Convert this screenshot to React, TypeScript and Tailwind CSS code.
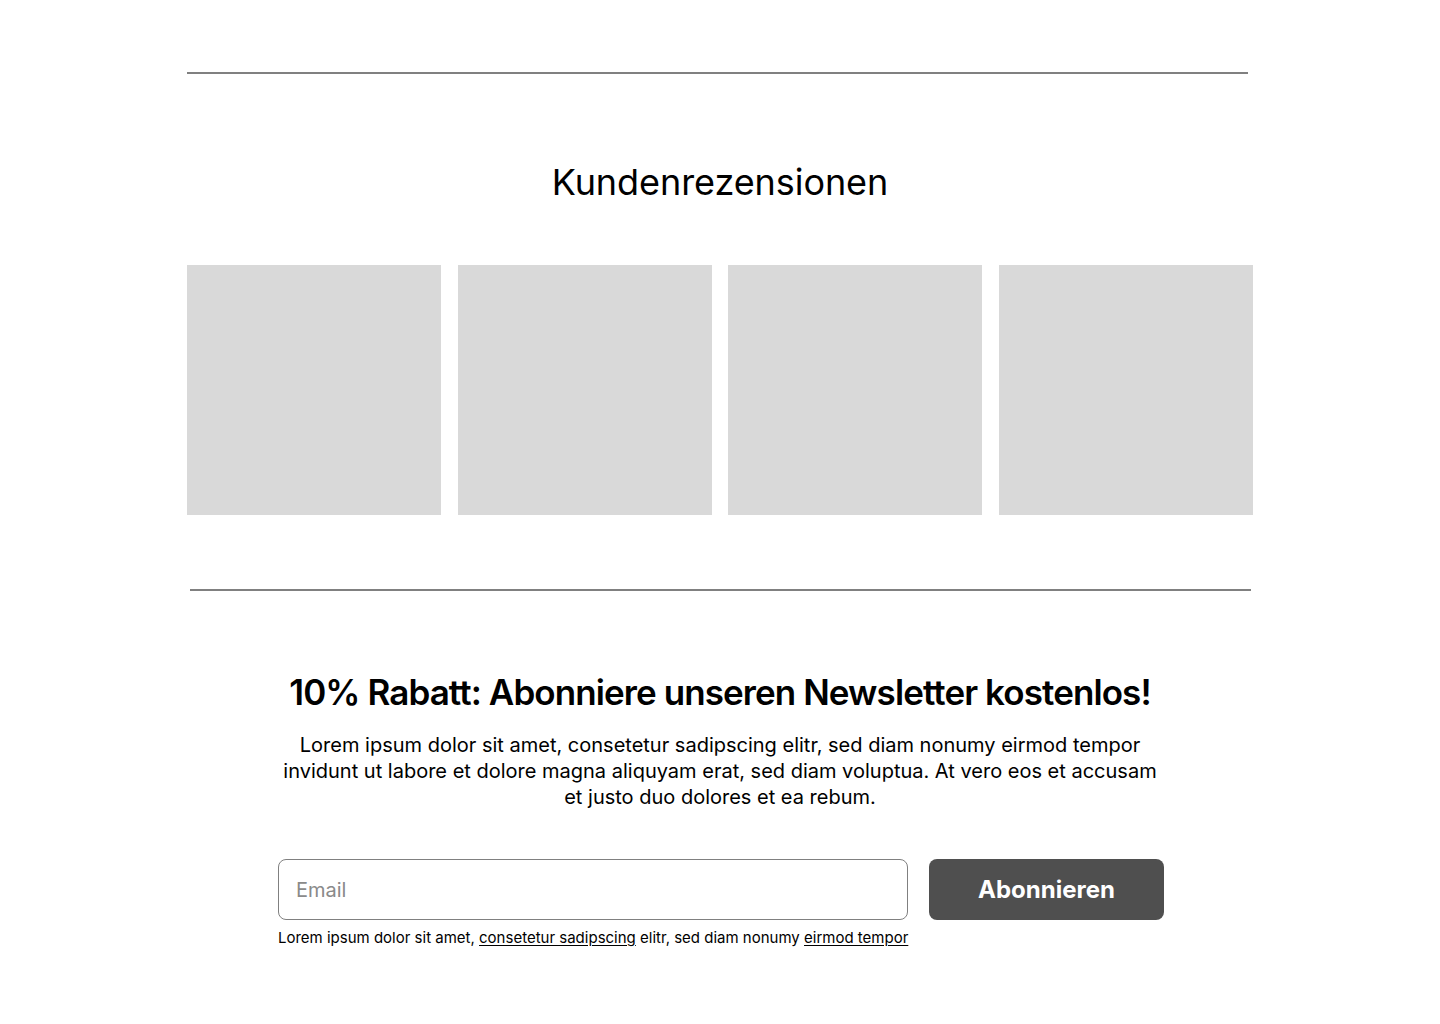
export default function App() {
  return (
    <div className="min-h-[1024px] bg-white text-black" style={{ fontFamily: 'Inter, "Noto Sans", sans-serif' }}>
      {/* Reviews */}
      <section className="pt-[72px]">
        <div className="ml-[187px] w-[1061px] h-[2px] bg-[#808080]" />
        <h2 className="mt-[86px] text-center text-[36px] leading-[44px] font-normal tracking-[-0.002em]">Kundenrezensionen</h2>
        <div className="mt-[61px] ml-[187px] flex gap-[16.5px]">
          <div className="w-[254px] h-[250px] bg-[#d9d9d9]" />
          <div className="w-[254px] h-[250px] bg-[#d9d9d9]" />
          <div className="w-[254px] h-[250px] bg-[#d9d9d9]" />
          <div className="w-[254px] h-[250px] bg-[#d9d9d9]" />
        </div>
        <div className="mt-[74px] ml-[190px] w-[1061px] h-[2px] bg-[#808080]" />
      </section>

      {/* Newsletter */}
      <section className="flex flex-col items-center pt-[79px]">
        <h2 className="text-[35px] leading-[44px] font-semibold tracking-[-0.026em]">
          10% Rabatt: Abonniere unseren Newsletter kostenlos!
        </h2>
        <p className="mt-[18px] w-[890px] text-center text-[20px] leading-[26px]">
          Lorem ipsum dolor sit amet, consetetur sadipscing elitr, sed diam nonumy eirmod tempor invidunt ut labore
          et dolore magna aliquyam erat, sed diam voluptua. At vero eos et accusam et justo duo dolores et ea rebum.
        </p>
        <div className="mt-[49px] ml-[2px] flex flex-col">
          <div className="flex gap-[21px]">
            <input
              type="email"
              placeholder="Email"
              className="w-[630px] h-[61px] rounded-[8px] border border-[#808080] px-[17px] text-[20px] placeholder:text-[#8a8a8a] outline-none"
            />
            <button className="w-[235px] h-[61px] rounded-[8px] bg-[#4f4f4f] text-white text-[24px] font-bold">
              Abonnieren
            </button>
          </div>
          <p className="mt-[8px] text-[15px] leading-[20px]">
            Lorem ipsum dolor sit amet, <span className="underline underline-offset-2">consetetur sadipscing</span> elitr,
            sed diam nonumy <span className="underline underline-offset-2">eirmod tempor</span>
          </p>
        </div>
      </section>
    </div>
  );
}
